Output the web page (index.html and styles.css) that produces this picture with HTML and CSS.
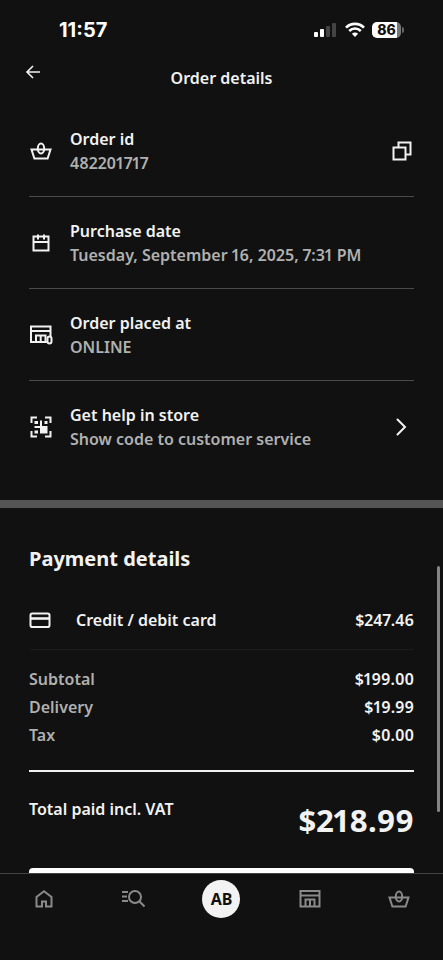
FILE: index.html
```html
<!DOCTYPE html>
<html lang="en">
<head>
<meta charset="utf-8">
<meta name="viewport" content="width=device-width, initial-scale=1">
<title>Order details</title>
<link rel="stylesheet" href="styles.css">
</head>
<body>
<div class="app">
  <div class="status">
    <span class="time">11:57</span>
    <div class="status-icons">
      <svg width="24" height="16" viewBox="0 0 24 16" aria-hidden="true">
        <rect x="0" y="10" width="4" height="5" rx="1" fill="#fff"/>
        <rect x="6" y="7" width="4" height="8" rx="1" fill="#fff"/>
        <rect x="12" y="4" width="4" height="11" rx="1" fill="#444"/>
        <rect x="18" y="1" width="4" height="14" rx="1" fill="#444"/>
      </svg>
      <svg width="20" height="16" viewBox="0 0 20 16" fill="none" stroke="#fff" stroke-width="2.6" aria-hidden="true">
        <path d="M1 5.6C6 .6 14 .6 19 5.6"/>
        <path d="M4.2 9C7.6 5.700 12.400 5.700 15.800 9"/>
        <path d="M10 15 6.900 11.800C8.600 10.200 11.400 10.200 13.100 11.800Z" fill="#fff" stroke="none"/>
      </svg>
      <div class="battery"><span class="battery-level">86</span></div>
    </div>
  </div>

  <header class="header">
    <button class="icon-button back" aria-label="Back">
      <svg width="16" height="16" viewBox="0 0 16 16" fill="none" stroke="currentColor" stroke-width="1.6"><path d="M15 8H2M8 2 2 8l6 6"/></svg>
    </button>
    <h1 class="title">Order details</h1>
  </header>

  <main class="content">
    <ul class="info">
      <li class="row">
        <svg class="icon" viewBox="0 0 24 24" aria-hidden="true"><path d="M2.500 10.500H21.500L18.600 19.500H5.400Z"/><ellipse cx="12" cy="9.500" rx="3.200" ry="5"/></svg>
        <div class="row-text"><h2 class="label">Order id</h2><p class="value">482201717</p></div>
        <button class="icon-button" aria-label="Copy order id">
          <svg class="icon" viewBox="0 0 24 24"><path d="M3.500 8.500H15.500V20.500H3.500ZM8.500 8.500V3.500H20.500V15.500H15.500"/></svg>
        </button>
      </li>
      <li class="row">
        <svg class="icon" viewBox="0 0 24 24" aria-hidden="true"><path d="M4.500 5.500H19.500V19.500H4.500ZM4.500 11H19.500M9 3.500V8.500M15 3.500V8.500"/></svg>
        <div class="row-text"><h2 class="label">Purchase date</h2><p class="value">Tuesday, September 16, 2025, 7:31 PM</p></div>
      </li>
      <li class="row">
        <svg class="icon" viewBox="0 0 24 24" aria-hidden="true"><path d="M18 19H2V3.500H21.500V13M2 8H21.500M7 19V12.500H16.500V19M11.700 12.500V19"/><rect x="18.500" y="13.500" width="4" height="7" rx="2"/></svg>
        <div class="row-text"><h2 class="label">Order placed at</h2><p class="value">ONLINE</p></div>
      </li>
      <li class="row">
        <svg class="icon" viewBox="0 0 24 24" aria-hidden="true"><path d="M2.500 8V2.500H8M16 2.500H21.500V8M2.500 16V21.500H8M16 21.500H21.500V16"/><path d="M5.500 6H9V9H5.500ZM15.500 6H18.500V9H15.500ZM5.500 15.500H9V18.500H5.500ZM11 5.500H13V11H18.500V18.500H11V13H5.500V11H11Z" fill="currentColor" stroke="none"/></svg>
        <div class="row-text"><h2 class="label">Get help in store</h2><p class="value">Show code to customer service</p></div>
        <button class="icon-button" aria-label="Show code">
          <svg class="icon" viewBox="0 0 24 24"><path d="M7.500 4.500 15 12 7.500 19.500" stroke-linecap="round"/></svg>
        </button>
      </li>
    </ul>

    <section class="payment">
      <h2 class="payment-title">Payment details</h2>
      <div class="method">
        <svg class="icon" viewBox="0 0 24 24" aria-hidden="true"><rect x="1.500" y="5.500" width="19" height="13.500" rx="1.800"/><path d="M2 10.500H21" stroke-width="2.600"/></svg>
        <span class="method-name">Credit / debit card</span>
        <span>$247.46</span>
      </div>
      <dl class="sums">
        <div class="sum"><dt>Subtotal</dt><dd>$199.00</dd></div>
        <div class="sum"><dt>Delivery</dt><dd>$19.99</dd></div>
        <div class="sum"><dt>Tax</dt><dd>$0.00</dd></div>
      </dl>
      <div class="total">
        <span>Total paid incl. VAT</span>
        <strong class="amount">$218.99</strong>
      </div>
      <button class="action" aria-label="View receipt"></button>
    </section>
  </main>

  <nav class="tabs" aria-label="Main">
    <a class="tab" href="#home" aria-label="Home"><svg class="icon" viewBox="0 0 24 24"><path d="M4.500 19.500V10L12 4.300 19.500 10V19.500H14V14.500H10V19.500Z"/></svg></a>
    <a class="tab" href="#search" aria-label="Search"><svg class="icon" viewBox="0 0 24 24"><circle cx="14" cy="10" r="6"/><path d="M18.300 14.300 23.500 19.500M1 5H7M1 9.500H6M1 14H7"/></svg></a>
    <a class="tab" href="#profile" aria-label="Profile"><span class="avatar">AB</span></a>
    <a class="tab" href="#stores" aria-label="Stores"><svg class="icon" viewBox="0 0 24 24"><path d="M2.500 4H21.500V19.500H2.500ZM2.500 8.500H21.500M7.500 19V12.500H16.500V19M12 12.500V19"/></svg></a>
    <a class="tab" href="#cart" aria-label="Cart"><svg class="icon" viewBox="0 0 24 24"><path d="M2.500 10.500H21.500L18.600 19.500H5.400Z"/><ellipse cx="12" cy="9.500" rx="3.200" ry="5"/></svg></a>
  </nav>
  <div class="scrollbar"></div>
</div>
</body>
</html>
```

FILE: styles.css
```css
* {
  box-sizing: border-box;
}

body,
h1,
h2,
p,
ul,
dl,
dd {
  margin: 0;
  padding: 0;
}

body {
  background: #111;
  color: #f2f2f2;
  font: 600 16px/24px "Noto Sans", sans-serif;
  font-variant-numeric: proportional-nums;
}

.app {
  position: relative;
  display: flex;
  flex-direction: column;
  height: 100vh;
}

.status {
  flex: none;
  display: flex;
  align-items: center;
  justify-content: space-between;
  height: 60px;
  padding: 0 40px 0 59px;
}

.time {
  color: #fff;
  font: 700 20px/24px Inter, sans-serif;
}

.status-icons {
  display: flex;
  align-items: center;
  gap: 7px;
}

.battery {
  position: relative;
  width: 29px;
  height: 16px;
  margin-right: 2px;
  border-radius: 5px;
  background: linear-gradient(to right, #fff 86%, #777 86%);
}

.battery::after {
  content: "";
  position: absolute;
  top: 5px;
  right: -3px;
  width: 2px;
  height: 6px;
  border-radius: 0 2px 2px 0;
  background: #666;
}

.battery-level {
  display: block;
  color: #111;
  font: 800 14px/16px Inter, sans-serif;
  text-align: center;
}

.header {
  flex: none;
  display: grid;
  grid-template-columns: 48px 1fr 48px;
  height: 45px;
  padding: 0 9px;
}

.title {
  margin-top: 6px;
  font-size: 16px;
  font-weight: 600;
  text-align: center;
}

.icon-button {
  display: flex;
  align-items: center;
  justify-content: center;
  width: 24px;
  height: 24px;
  padding: 0;
  border: 0;
  background: none;
  color: inherit;
}

.back {
  width: 48px;
}

.icon {
  flex: none;
  width: 24px;
  height: 24px;
  fill: none;
  stroke: currentColor;
  stroke-width: 2;
}

.content {
  flex: 1;
  min-height: 0;
  overflow: hidden;
}

.info {
  padding: 0 29px 27px;
  list-style: none;
}

.row {
  display: flex;
  align-items: center;
  gap: 17px;
  height: 92px;
  border-bottom: 1px solid #4a4a4a;
}

.row:last-child {
  border-bottom-color: transparent;
}

.row-text {
  flex: 1;
}

.label {
  font-size: 16px;
  font-weight: 600;
}

.value,
dt {
  color: #b0b0b0;
}

.payment {
  padding: 37px 29px 0;
  border-top: 8px solid #555;
}

.payment-title {
  font-size: 20px;
  font-weight: 700;
  line-height: 28px;
}

.method {
  display: flex;
  align-items: center;
  height: 77px;
  padding-top: 18px;
  border-bottom: 1px solid #1c1c1c;
}

.method-name {
  flex: 1;
  margin-left: 23px;
}

.sums {
  padding: 15px 0 21px;
  border-bottom: 2px solid #f2f2f2;
}

.sum {
  display: flex;
  justify-content: space-between;
  line-height: 28px;
}

.total {
  display: flex;
  justify-content: space-between;
  padding-top: 25px;
}

.amount {
  font-size: 31px;
  font-weight: 700;
  line-height: 46px;
}

.action {
  display: block;
  width: 100%;
  height: 48px;
  margin-top: 25px;
  border: 0;
  border-radius: 4px;
  background: #fff;
}

.tabs {
  flex: none;
  display: grid;
  grid-template-columns: repeat(5, 1fr);
  height: 87px;
  padding-top: 6px;
  border-top: 1px solid #444;
}

.tab {
  display: flex;
  align-items: center;
  justify-content: center;
  height: 38px;
  color: #8a8a8a;
  text-decoration: none;
}

.avatar {
  width: 38px;
  height: 38px;
  border-radius: 50%;
  background: #f2f2f2;
  color: #111;
  font-weight: 700;
  line-height: 38px;
  text-align: center;
}

.scrollbar {
  position: absolute;
  top: 566px;
  right: 3px;
  width: 3px;
  height: 246px;
  border-radius: 2px;
  background: #858585;
}
```
